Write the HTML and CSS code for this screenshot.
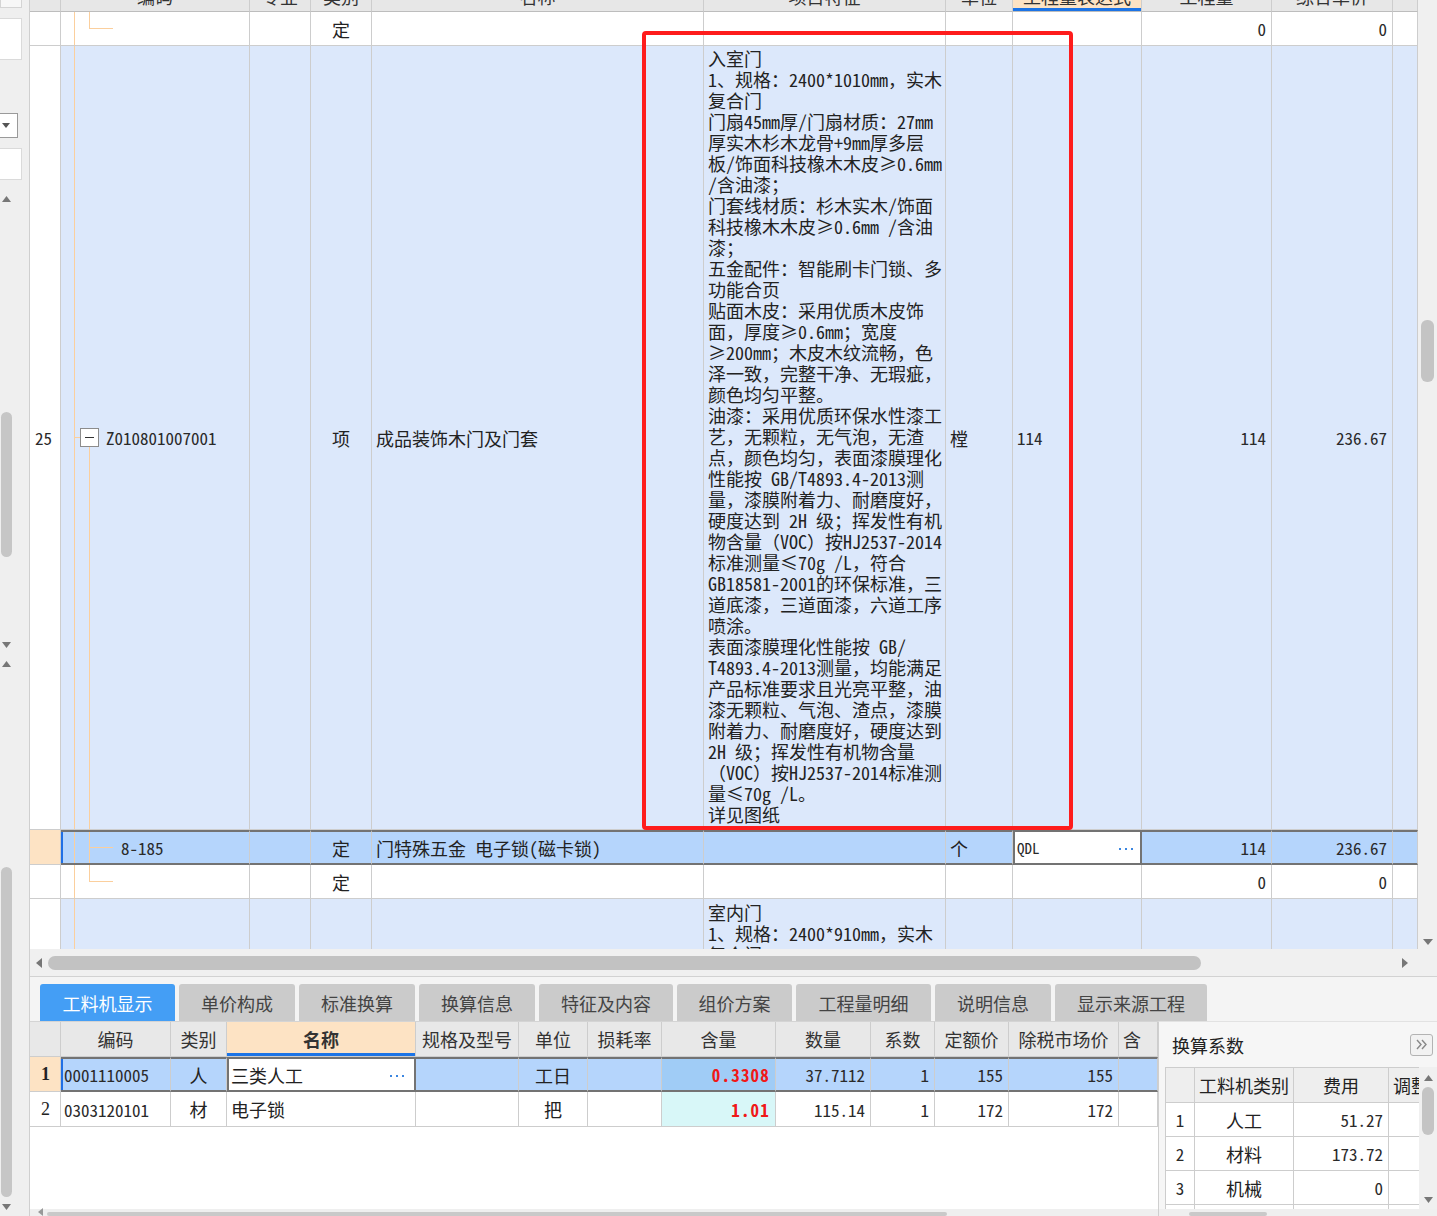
FILE: index.html
```html
<!DOCTYPE html>
<html lang="zh-CN">
<head>
<meta charset="utf-8">
<title>GLD</title>
<link rel="stylesheet" href="styles.css">
</head>
<body>
<div class="app">
  <aside class="left-strip">
    <div class="ls-top"></div>
    <div class="ls-input ls-input-a"></div>
    <div class="ls-select"><svg width="8" height="5" viewBox="0 0 8 5"><polygon points="0,0 8,0 4,5" fill="#555"/></svg></div>
    <div class="ls-input ls-input-b"></div>
    <div class="ls-scroll ls-scroll-a">
      <svg class="arr" width="9" height="6" viewBox="0 0 9 6"><polygon points="0,6 9,6 4.5,0" fill="#777"/></svg>
      <div class="ls-thumb ls-thumb-a"></div>
      <svg class="arr arr-end" width="9" height="6" viewBox="0 0 9 6"><polygon points="0,0 9,0 4.5,6" fill="#777"/></svg>
    </div>
    <div class="ls-scroll ls-scroll-b">
      <svg class="arr" width="9" height="6" viewBox="0 0 9 6"><polygon points="0,6 9,6 4.5,0" fill="#777"/></svg>
      <div class="ls-thumb ls-thumb-b"></div>
      <svg class="arr arr-end" width="9" height="6" viewBox="0 0 9 6"><polygon points="0,0 9,0 4.5,6" fill="#777"/></svg>
    </div>
  </aside>

  <main class="main">
    <section class="top">
      <div class="grid-wrap">
        <div class="row hdr">
          <div class="c"></div>
          <div class="c ctr"><span>编码</span></div>
          <div class="c ctr"><span>专业</span></div>
          <div class="c ctr"><span>类别</span></div>
          <div class="c ctr"><span>名称</span></div>
          <div class="c ctr"><span>项目特征</span></div>
          <div class="c ctr"><span>单位</span></div>
          <div class="c ctr hl"><span>工程量表达式</span></div>
          <div class="c ctr"><span>工程量</span></div>
          <div class="c ctr"><span>综合单价</span></div>
          <div class="c"></div>
        </div>

        <div class="row r34">
          <div class="c num"></div>
          <div class="c code tree t-end"></div>
          <div class="c"></div>
          <div class="c ctr">定</div>
          <div class="c"></div>
          <div class="c"></div>
          <div class="c"></div>
          <div class="c"></div>
          <div class="c rt mono">0</div>
          <div class="c rt mono">0</div>
          <div class="c"></div>
        </div>

        <div class="row r-big blue">
          <div class="c num mono">25</div>
          <div class="c code tree t-parent"><span class="toggle"><span class="minus"></span></span><span class="mono code-txt">Z010801007001</span></div>
          <div class="c"></div>
          <div class="c ctr">项</div>
          <div class="c">成品装饰木门及门套</div>
          <div class="c desc">入室门<br>1、规格：2400*1010mm，实木<br>复合门<br>门扇45mm厚/门扇材质：27mm<br>厚实木杉木龙骨+9mm厚多层<br>板/饰面科技橡木木皮≥0.6mm<br>/含油漆；<br>门套线材质：杉木实木/饰面<br>科技橡木木皮≥0.6mm /含油<br>漆；<br>五金配件：智能刷卡门锁、多<br>功能合页<br>贴面木皮：采用优质木皮饰<br>面，厚度≥0.6mm；宽度<br>≥200mm；木皮木纹流畅，色<br>泽一致，完整干净、无瑕疵，<br>颜色均匀平整。<br>油漆：采用优质环保水性漆工<br>艺，无颗粒，无气泡，无渣<br>点，颜色均匀，表面漆膜理化<br>性能按 GB/T4893.4-2013测<br>量，漆膜附着力、耐磨度好，<br>硬度达到 2H 级；挥发性有机<br>物含量（VOC）按HJ2537-2014<br>标准测量≤70g /L，符合<br>GB18581-2001的环保标准，三<br>道底漆，三道面漆，六道工序<br>喷涂。<br>表面漆膜理化性能按 GB/<br>T4893.4-2013测量，均能满足<br>产品标准要求且光亮平整，油<br>漆无颗粒、气泡、渣点，漆膜<br>附着力、耐磨度好，硬度达到<br>2H 级；挥发性有机物含量<br>（VOC）按HJ2537-2014标准测<br>量≤70g /L。<br>详见图纸</div>
          <div class="c">樘</div>
          <div class="c mono">114</div>
          <div class="c rt mono">114</div>
          <div class="c rt mono">236.67</div>
          <div class="c"></div>
        </div>

        <div class="row r-sel">
          <div class="c num orange"></div>
          <div class="c code tree t-mid sel-edge"><span class="mono child-code">8-185</span></div>
          <div class="c"></div>
          <div class="c ctr">定</div>
          <div class="c">门特殊五金 电子锁(磁卡锁)</div>
          <div class="c"></div>
          <div class="c">个</div>
          <div class="c edit"><span class="mono qdl">QDL</span><span class="dots"></span></div>
          <div class="c rt mono">114</div>
          <div class="c rt mono">236.67</div>
          <div class="c"></div>
        </div>

        <div class="row r34">
          <div class="c num"></div>
          <div class="c code tree t-end"></div>
          <div class="c"></div>
          <div class="c ctr">定</div>
          <div class="c"></div>
          <div class="c"></div>
          <div class="c"></div>
          <div class="c"></div>
          <div class="c rt mono">0</div>
          <div class="c rt mono">0</div>
          <div class="c"></div>
        </div>

        <div class="row r-last blue">
          <div class="c num"></div>
          <div class="c code tree t-line"></div>
          <div class="c"></div>
          <div class="c"></div>
          <div class="c"></div>
          <div class="c desc desc-last">室内门<br>1、规格：2400*910mm，实木<br>复合门</div>
          <div class="c"></div>
          <div class="c"></div>
          <div class="c"></div>
          <div class="c"></div>
          <div class="c"></div>
        </div>

        <div class="redbox"></div>
      </div>
      <div class="vscroll">
        <div class="vthumb"></div>
        <svg class="vdown" width="10" height="6" viewBox="0 0 10 6"><polygon points="0,0 10,0 5,6" fill="#777"/></svg>
      </div>
    </section>

    <div class="hscroll">
      <div class="hs-track">
        <svg class="hs-arr" width="6" height="10" viewBox="0 0 6 10"><polygon points="6,0 6,10 0,5" fill="#777"/></svg>
        <div class="hs-thumb"></div>
        <svg class="hs-arr hs-arr-r" width="6" height="10" viewBox="0 0 6 10"><polygon points="0,0 0,10 6,5" fill="#777"/></svg>
      </div>
      <div class="hs-corner"></div>
    </div>

    <section class="bottom">
      <nav class="tabs">
        <div class="tab active w135">工料机显示</div>
        <div class="tab w116">单价构成</div>
        <div class="tab w116">标准换算</div>
        <div class="tab w116">换算信息</div>
        <div class="tab w134">特征及内容</div>
        <div class="tab w115">组价方案</div>
        <div class="tab w135">工程量明细</div>
        <div class="tab w116">说明信息</div>
        <div class="tab w152">显示来源工程</div>
      </nav>
      <div class="bottom-body">
        <div class="mat">
          <div class="mrow mhdr">
            <div class="c"></div>
            <div class="c ctr">编码</div>
            <div class="c ctr">类别</div>
            <div class="c ctr hl bold">名称</div>
            <div class="c ctr">规格及型号</div>
            <div class="c ctr">单位</div>
            <div class="c ctr">损耗率</div>
            <div class="c ctr">含量</div>
            <div class="c ctr">数量</div>
            <div class="c ctr">系数</div>
            <div class="c ctr">定额价</div>
            <div class="c ctr">除税市场价</div>
            <div class="c">含</div>
          </div>
          <div class="mrow msel">
            <div class="c num orange bold serif">1</div>
            <div class="c sel-edge mono mcode">0001110005</div>
            <div class="c ctr">人</div>
            <div class="c edit medit">三类人工<span class="dots"></span></div>
            <div class="c"></div>
            <div class="c ctr">工日</div>
            <div class="c"></div>
            <div class="c rt mono red qty-dark">0.3308</div>
            <div class="c rt mono">37.7112</div>
            <div class="c rt mono">1</div>
            <div class="c rt mono">155</div>
            <div class="c rt mono">155</div>
            <div class="c"></div>
          </div>
          <div class="mrow">
            <div class="c num ctr serif">2</div>
            <div class="c mono mcode">0303120101</div>
            <div class="c ctr">材</div>
            <div class="c">电子锁</div>
            <div class="c"></div>
            <div class="c ctr">把</div>
            <div class="c"></div>
            <div class="c rt mono red qty-cyan">1.01</div>
            <div class="c rt mono">115.14</div>
            <div class="c rt mono">1</div>
            <div class="c rt mono">172</div>
            <div class="c rt mono">172</div>
            <div class="c"></div>
          </div>
          <div class="mat-fill"></div>
          <div class="mini-hs"><svg width="5" height="8" viewBox="0 0 5 8"><polygon points="5,0 5,8 0,4" fill="#999"/></svg><div class="mini-thumb mt-a"></div></div>
        </div>

        <aside class="side">
          <div class="side-title">
            <span>换算系数</span>
            <span class="collapse"><svg width="13" height="11" viewBox="0 0 13 11"><path d="M2 1 L6 5.5 L2 10 M7 1 L11 5.5 L7 10" fill="none" stroke="#888" stroke-width="1.4"/></svg></span>
          </div>
          <div class="side-body">
            <div class="stable">
              <div class="srow shdr">
                <div class="c"></div>
                <div class="c ctr">工料机类别</div>
                <div class="c ctr">费用</div>
                <div class="c">调整</div>
              </div>
              <div class="srow">
                <div class="c ctr mono">1</div>
                <div class="c ctr">人工</div>
                <div class="c rt mono">51.27</div>
                <div class="c"></div>
              </div>
              <div class="srow">
                <div class="c ctr mono">2</div>
                <div class="c ctr">材料</div>
                <div class="c rt mono">173.72</div>
                <div class="c"></div>
              </div>
              <div class="srow">
                <div class="c ctr mono">3</div>
                <div class="c ctr">机械</div>
                <div class="c rt mono">0</div>
                <div class="c"></div>
              </div>
              <div class="srow">
                <div class="c"></div>
                <div class="c"></div>
                <div class="c"></div>
                <div class="c"></div>
              </div>
            </div>
            <div class="svscroll">
              <svg width="9" height="6" viewBox="0 0 9 6"><polygon points="0,6 9,6 4.5,0" fill="#777"/></svg>
              <div class="sv-thumb"></div>
              <svg class="sv-down" width="9" height="6" viewBox="0 0 9 6"><polygon points="0,0 9,0 4.5,6" fill="#777"/></svg>
            </div>
          </div>
          <div class="mini-hs side-hs"><div class="mini-thumb mt-b"></div></div>
        </aside>
      </div>
    </section>
  </main>
</div>
</body>
</html>
```

FILE: styles.css
```css
* { box-sizing: border-box; }
html, body { margin: 0; padding: 0; }
body {
  width: 1437px;
  height: 1216px;
  overflow: hidden;
  background: #f3f3f3;
  font-family: "Noto Sans Mono CJK SC", "Noto Sans CJK SC", sans-serif;
  font-size: 18px;
  color: #222;
}
.app { display: flex; height: 1216px; }

/* ---------- left strip ---------- */
.left-strip {
  width: 30px;
  flex: none;
  background: #efefef;
  border-right: 1px solid #cfcfcf;
  display: flex;
  flex-direction: column;
}
.ls-top { height: 8px; width: 22px; border: 1px solid #d4d4d4; border-top: none; background: #f7f7f7; flex: none; }
.ls-input { width: 22px; background: #fff; border: 1px solid #dadada; border-left: none; flex: none; }
.ls-input-a { height: 42px; margin-top: 10px; }
.ls-select {
  margin-top: 53px; height: 25px; width: 18px; flex: none;
  background: #fff; border: 1px solid #9a9a9a; border-left: none;
  display: flex; align-items: center; padding-left: 2px;
}
.ls-input-b { height: 32px; margin-top: 10px; }
.ls-scroll {
  width: 13px;
  display: flex; flex-direction: column; align-items: center;
}
.ls-scroll-a { margin-top: 12px; height: 462px; padding-top: 4px; flex: none; }
.ls-scroll-b { padding-top: 7px; flex: 1; min-height: 0; }
.ls-thumb { width: 11px; background: #c6c6c6; border-radius: 6px; flex: none; }
.ls-thumb-a { height: 145px; margin-top: 210px; }
.ls-thumb-b { height: 330px; margin-top: 200px; }
.arr-end { margin-top: auto; margin-bottom: 6px; flex: none; }

/* ---------- main ---------- */
.main { width: 1407px; display: flex; flex-direction: column; height: 1216px; }
.top { height: 949px; flex: none; display: flex; background: #fff; }
.grid-wrap {
  position: relative;
  width: 1388px;
  height: 949px;
  overflow: hidden;
  background: #fff;
}
.row {
  display: grid;
  grid-template-columns: 31px 189px 61px 61px 332px 242px 67px 129px 130px 121px 25px;
}
.c {
  border-right: 1px solid #cdcdcd;
  border-bottom: 1px solid #cdcdcd;
  display: flex;
  align-items: center;
  padding: 0 4px;
  overflow: hidden;
  white-space: nowrap;
  min-width: 0;
}
.ctr { justify-content: center; }
.rt { justify-content: flex-end; padding-right: 5px; }
.mono { font-size: 17px; color: #2a2a2a; }
.bold { font-weight: bold; }
.serif { font-family: "Liberation Serif", serif; font-size: 18px; }

.hdr { height: 12px; background: #e7e7e7; }
.hdr .c { height: 12px; align-items: flex-start; border-bottom: 1px solid #bdbdbd; color: #333; }
.hdr .c span { display: block; line-height: 18px; margin-top: -13px; }
.hl { background: #fde3c4; box-shadow: inset 0 -3px 0 #1c74e6; }

.r34 .c { height: 34px; }
.r-big .c { height: 784px; }
.r-last .c { height: 60px; }
.blue .c { background-color: #dce8fb; }
.blue .c.num { background-color: #fff; }
.num { padding-left: 5px; }

.r-sel .c {
  height: 35px;
  background-color: #b5d5fc;
  border-top: 2px solid #737373;
  border-bottom: 2px solid #737373;
}
.r-sel .c.num {
  background-color: #fde3c4;
  border-top: none;
  border-bottom: 1px solid #cdcdcd;
}
.sel-edge { box-shadow: inset 2px 0 0 #1f6fe5; }
.r-sel .c.edit {
  background-color: #fff;
  border-left: 2px solid #737373;
  border-right: 2px solid #737373;
  justify-content: space-between;
  padding: 0 5px 0 2px;
}
.qdl { font-size: 15px; }
.dots {
  width: 16px; height: 2px;
  margin-top: 3px;
  background-image: linear-gradient(90deg, #3b86e0 2px, transparent 2px);
  background-size: 6px 2px;
  background-repeat: repeat-x;
  flex: none;
}

/* tree lines */
.code { padding-left: 0; }
.tree {
  background-repeat: no-repeat;
  --tl: linear-gradient(#fbcf9d, #fbcf9d);
}
.t-end {
  background-image: var(--tl), var(--tl), var(--tl);
  background-position: 13px 0, 28px 0, 28px 50%;
  background-size: 1px 100%, 1px 50%, 24px 1px;
}
.t-parent {
  background-image: var(--tl), var(--tl), var(--tl);
  background-position: 13px 0, 13px 50%, 28px 100%;
  background-size: 1px 100%, 6px 1px, 1px calc(50% - 9px);
}
.t-mid {
  background-image: var(--tl), var(--tl), var(--tl);
  background-position: 13px 0, 28px 0, 28px 50%;
  background-size: 1px 100%, 1px 100%, 24px 1px;
}
.t-line {
  background-image: var(--tl);
  background-position: 13px 0;
  background-size: 1px 100%;
}
.toggle {
  width: 19px; height: 19px;
  margin-left: 19px;
  border: 1px solid #8c8c8c;
  background: #fff;
  display: flex; align-items: center; justify-content: center;
  flex: none;
}
.minus { width: 9px; height: 1px; background: #333; }
.code-txt { margin-left: 7px; }
.child-code { margin-left: 60px; }

.desc {
  align-items: flex-start;
  display: block;
  white-space: nowrap;
  line-height: 21px;
  padding-top: 2px;
}
.desc-last { padding-top: 3px; }

.redbox {
  position: absolute;
  left: 612px;
  top: 31px;
  width: 431px;
  height: 799px;
  border: 4px solid #fe1c1c;
  border-radius: 4px;
}

.vscroll {
  width: 19px;
  background: #f0f0f0;
  display: flex; flex-direction: column; align-items: center;
}
.vthumb { width: 13px; height: 62px; margin-top: 320px; background: #c4c4c4; border-radius: 6px; }
.vdown { margin-top: auto; margin-bottom: 4px; }

.hscroll { height: 28px; flex: none; display: flex; border-bottom: 1px solid #d2d2d2; }
.hs-track {
  width: 1388px;
  background: #f0f0f0;
  display: flex; align-items: center;
  padding-left: 6px;
}
.hs-thumb { width: 1153px; height: 14px; margin-left: 6px; background: #c2c2c2; border-radius: 7px; }
.hs-arr-r { margin-left: auto; margin-right: 10px; }
.hs-corner { width: 19px; background: #f0f0f0; }

/* ---------- bottom ---------- */
.bottom { flex: 1; min-height: 0; display: flex; flex-direction: column; background: #f4f4f4; }
.tabs { height: 44px; flex: none; padding: 7px 0 0 10px; display: flex; gap: 4px; }
.tab {
  height: 37px;
  background: #cbcbcb;
  color: #444;
  border-radius: 3px 3px 0 0;
  display: flex; align-items: center; justify-content: center;
  font-size: 18px;
}
.tab.active { background: #449ef5; color: #fff; }
.w135 { width: 135px; } .w116 { width: 116px; } .w134 { width: 134px; }
.w115 { width: 115px; } .w152 { width: 152px; }

.bottom-body { flex: 1; min-height: 0; overflow: hidden; display: flex; }
.mat {
  width: 1128px;
  background: #fff;
  border-top: 1px solid #d4d4d4;
  display: flex; flex-direction: column;
}
.mrow {
  display: grid;
  grid-template-columns: 31px 110px 56px 189px 103px 69px 74px 114px 95px 64px 74px 110px 39px;
  flex: none;
}
.mrow .c { height: 35px; }
.mhdr .c { background: #e8e8e8; color: #333; }
.mhdr .c.hl { background: #fde3c4; }
.msel .c {
  background: #b5d5fc;
  border-top: 2px solid #737373;
  border-bottom: 2px solid #737373;
}
.msel .c.num { background: #fde3c4; border-top: none; border-bottom: 1px solid #cdcdcd; justify-content: center; }
.mcode { padding-left: 3px; font-size: 17px; }
.msel .c.medit {
  background: #fff;
  border-left: 2px solid #737373;
  border-right: 2px solid #737373;
  justify-content: space-between;
  padding: 0 8px 0 2px;
}
.red { color: #f01818; font-weight: bold; font-size: 17px; letter-spacing: 1.2px; }
.msel .c.qty-dark { background: #a0ccf6; }
.qty-cyan { background: #d8f7f8; }
.mat-fill { flex: 1; min-height: 0; }
.mini-hs { height: 7px; flex: none; background: #efefef; display: flex; align-items: flex-end; padding-left: 8px; gap: 4px; }
.mini-thumb { height: 4px; background: #c9c9c9; border-radius: 2px; }
.mt-a { width: 900px; }

.side {
  flex: 1;
  min-height: 0;
  background: #f6f6f6;
  border-left: 1px solid #cfcfcf;
  border-top: 1px solid #e2e2e2;
  display: flex; flex-direction: column;
  padding-left: 6px;
}
.side-title {
  height: 45px;
  flex: none;
  display: flex; align-items: center; justify-content: space-between;
  padding: 0 4px 0 7px;
  color: #222;
}
.collapse {
  width: 23px; height: 22px;
  border: 1px solid #b3b3b3; border-radius: 3px;
  background: #f2f2f2;
  display: flex; align-items: center; justify-content: center;
}
.side-body { flex: 1; min-height: 0; overflow: hidden; display: flex; }
.stable { width: 254px; background: #fff; border-left: 1px solid #cdcdcd; border-top: 1px solid #cdcdcd; overflow: hidden; }
.srow { display: grid; grid-template-columns: 29px 99px 95px 31px; }
.srow .c { height: 34px; }
.shdr .c { height: 35px; background: #eeeeee; }
.svscroll {
  width: 18px; background: #f0f0f0;
  display: flex; flex-direction: column; align-items: center;
  padding-top: 8px;
}
.sv-thumb { width: 12px; height: 48px; margin-top: 6px; background: #c4c4c4; border-radius: 6px; }
.sv-down { margin-top: auto; margin-bottom: 6px; }
.side-hs { margin-left: -6px; padding-left: 30px; }
.mt-b { width: 78px; }
```
